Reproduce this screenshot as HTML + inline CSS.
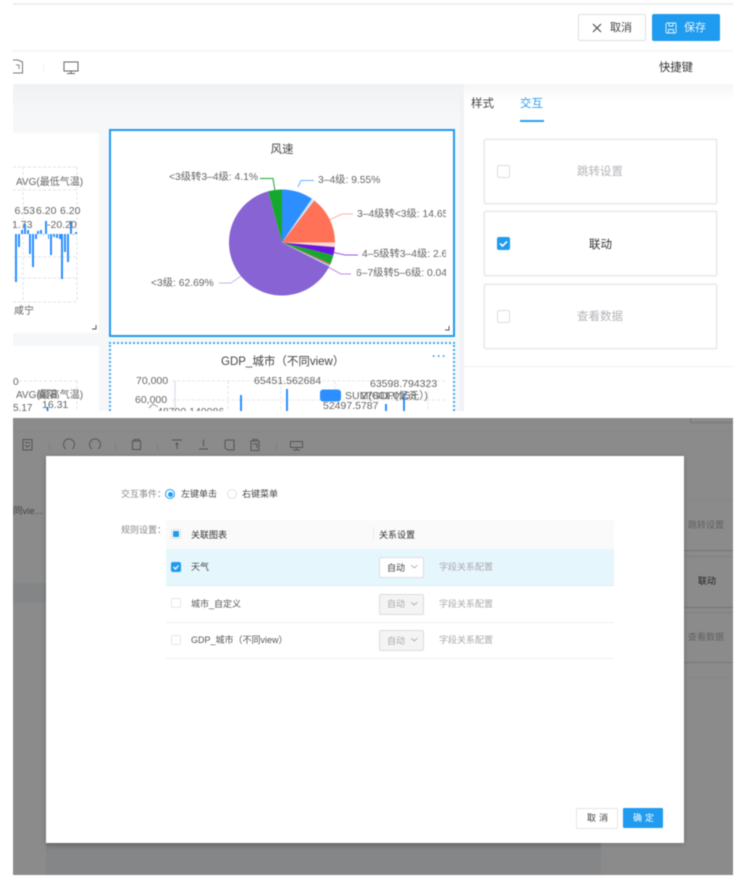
<!DOCTYPE html>
<html><head><meta charset="utf-8">
<style>
*{box-sizing:border-box;margin:0;padding:0}
html,body{width:754px;height:884px;background:#fff;overflow:hidden}
body{font-family:"Liberation Sans","Noto Sans CJK SC",sans-serif;position:relative;color:#333}
.a{position:absolute}
.t{position:absolute;white-space:nowrap;line-height:1}
#top,#bot{position:absolute;left:13px;width:720px;overflow:hidden;filter:blur(.4px)}
#top{top:0;height:411px;background:#fff}
#bot{top:418px;height:457px;background:#8b8b8b}
.card{position:absolute;left:471px;width:233px;height:65px;border:1px solid #e3e4e7;border-radius:2px;background:#fff;box-shadow:0 0 2px rgba(0,0,0,.08)}
.cb{position:absolute;width:13px;height:13px;border:1px solid #dcdde0;border-radius:2px;background:#fff}
.cb.on{background:#1f9bef;border-color:#1f9bef}
.sel{position:absolute;left:366px;width:45px;height:21px;border:1px solid #ddd;border-radius:2px;font-size:9px}
.sel span{position:absolute;left:7px;top:5.500px;line-height:1;white-space:nowrap}
.sel i{position:absolute;left:31.500px;top:5px;width:4.500px;height:4.500px;border-right:1px solid #aaa;border-bottom:1px solid #aaa;transform:scaleY(.8) rotate(45deg)}
.ln{position:absolute;left:153px;width:448px;height:1px;background:#efefef}
.hl{position:absolute;left:671px;width:49px;height:1px}
.lb{font-size:10.300px;color:#666}
</style></head><body>

<div id="top">
  <div class="a" style="left:0;top:3px;width:720px;height:2px;background:#eeeeee"></div>
  <div class="a" style="left:0;top:50px;width:720px;height:2px;background:#f6f6f6"></div>

  <div class="a" style="left:565px;top:14px;width:68px;height:27px;border:1px solid #dedede;border-radius:2px;background:#fff"></div>
  <svg class="a" style="left:579px;top:23px" width="10" height="10" viewBox="0 0 10 10"><path d="M1 1L9 9M9 1L1 9" stroke="#444" stroke-width="1.100" fill="none"/></svg>
  <div class="t" style="left:597px;top:23px;font-size:11px;color:#444">取消</div>
  <div class="a" style="left:639px;top:14px;width:68px;height:27px;border-radius:2px;background:#1f9bef"></div>
  <svg class="a" style="left:652px;top:22px" width="12" height="12" viewBox="0 0 12 12"><path d="M2 1H10.500L11 2V10.500L10.500 11H1.500L1 10.500V2ZM4 1V4H8V1M3.500 11V7.500H8.500V11" stroke="#e6f4fe" stroke-width=".9" fill="none"/></svg>
  <div class="t" style="left:671px;top:23px;font-size:11px;color:#e9f5fe">保存</div>

  <!-- toolbar -->
  <svg class="a" style="left:0;top:59px" width="12" height="16" viewBox="0 0 12 16"><path d="M0 1H5L9.500 3V14H0" stroke="#777" fill="none"/><path d="M3 6H6V10" stroke="#888" fill="none"/></svg>
  <div class="a" style="left:30px;top:63px;width:1px;height:10px;background:#f4f4f4"></div>
  <svg class="a" style="left:50px;top:61px" width="16" height="14" viewBox="0 0 16 14"><path d="M1 1H15V10H1ZM8 10V12.500M4 12.500H12" stroke="#666" fill="none" stroke-width="1"/></svg>
  <div class="t" style="left:646px;top:63px;font-size:11.300px;color:#333">快捷键</div>

  <!-- canvas -->
  <div class="a" style="left:0;top:84px;width:451px;height:327px;background:linear-gradient(#f1f2f4,#f6f7f9 30px)"></div>
  <div class="a" style="left:447px;top:84px;width:4px;height:327px;background:#f0f2f6"></div>
  <div class="a" style="left:451px;top:84px;width:269px;height:327px;background:linear-gradient(#f6f6f6,#fff 16px)"></div>

  <!-- left card 1 -->
  <div class="a" style="left:0;top:133px;width:86px;height:200px;background:#fff;overflow:hidden">
    <svg class="a" style="left:0;top:0" width="86" height="200">
      <g stroke="#e4e4e4" stroke-dasharray="3 2" fill="none">
        <path d="M0 34H64M0 57H64M0 124H64M0 145H64M0 169H64M10 34V169M64 34V169"/>
      </g>
      <g fill="#2d8fff">
        <rect x="2" y="101" width="2" height="48"/><rect x="5" y="101" width="2" height="13"/>
        <rect x="8" y="97" width="2" height="4"/><rect x="11" y="91" width="2" height="10"/><rect x="14" y="97" width="2" height="4"/>
        <rect x="16" y="101" width="2" height="20"/><rect x="19" y="101" width="2" height="33"/><rect x="22" y="101" width="2" height="5"/>
        <rect x="24" y="98" width="2" height="3"/><rect x="27" y="97" width="2" height="4"/><rect x="30" y="101" width="1" height="1"/>
        <rect x="32" y="88" width="2" height="13"/><rect x="35" y="101" width="1" height="5"/><rect x="37" y="101" width="2" height="21"/>
        <rect x="40" y="101" width="2" height="3"/><rect x="43" y="101" width="2" height="4"/><rect x="46" y="101" width="2" height="5"/>
        <rect x="48" y="101" width="2" height="45"/><rect x="51" y="101" width="2" height="18"/><rect x="54" y="101" width="2" height="28"/>
        <rect x="57" y="88" width="2" height="13"/><rect x="60" y="101" width="1" height="1"/><rect x="62" y="99" width="2" height="2"/>
      </g>
    </svg>
    <div class="t" style="left:3px;top:44.500px;font-size:10px;color:#666">AVG(最低气温)</div>
    <div class="t" style="left:1.500px;top:73px;font-size:10.500px;color:#666">6.53</div>
    <div class="t" style="left:23px;top:73px;font-size:10.500px;color:#666">6.20</div>
    <div class="t" style="left:47px;top:73px;font-size:10.500px;color:#666">6.20</div>
    <div class="t" style="left:-1px;top:87px;font-size:10.500px;color:#666">1.73</div>
    <div class="t" style="left:34px;top:87px;font-size:10.500px;color:#666">-20.20</div>
    <div class="t" style="left:1px;top:174px;font-size:10px;color:#666">咸宁</div>
    <svg class="a" style="left:78px;top:191px" width="6" height="6"><path d="M5 1V5H1" stroke="#555" fill="none"/></svg>
  </div>

  <!-- selected card -->
  <div class="a" style="left:96px;top:129px;width:346px;height:208px;border:2px solid #1f9bef;background:#fff;overflow:hidden"></div>
  <div class="t" style="left:257.500px;top:144.500px;font-size:11.500px;color:#444">风速</div>
  <svg class="a" style="left:96px;top:129px" width="346" height="208" viewBox="109 129 346 208">
    <g fill="none" stroke-width="1">
      <path d="M260 178.500H273L275 191" stroke="#16a72e"/>
      <path d="M298 187L301 180.500H314" stroke="#6db3ff"/>
      <path d="M329 220L342 214H353" stroke="#ffb3a6"/>
      <path d="M334 252.500L345 255H358" stroke="#9a55ee"/>
      <path d="M328 267L341 274H351" stroke="#c48cf0"/>
      <path d="M219 283H231L241 276" stroke="#c8b4ec"/>
    </g>
    <path d="M282 242.500L329.200 266.600A53 53 0 1 1 268.300 191.300Z" fill="#8763d4"/>
    <path d="M282 242.500L268.300 191.300A53 53 0 0 1 282 189.500Z" fill="#16a72e"/>
    <path d="M282 242.500V189.500A53 53 0 0 1 311.900 198.800Z" fill="#2d8fff"/>
    <path d="M282 242.500L311.900 198.800A53 53 0 0 1 314.300 200.500Z" fill="#cfe4ff"/>
    <path d="M282 242.500L314.300 200.500A53 53 0 0 1 335 242.500Z" fill="#ff7258"/>
    <path d="M282 242.500H335A53 53 0 0 1 334.800 247.100Z" fill="#ffd9d2"/>
    <path d="M282 242.500L334.800 247.100A53 53 0 0 1 333.400 255.300Z" fill="#6c16dd"/>
    <path d="M282 242.500L333.400 255.300A53 53 0 0 1 330.600 263.600Z" fill="#16a72e"/>
    <path d="M282 242.500L330.600 263.600A53 53 0 0 1 330 264.900Z" fill="#e0532c"/>
    <path d="M282 242.500L330 264.900A53 53 0 0 1 329.200 266.600Z" fill="#9fc9f5"/>
  </svg>
  <div class="t lb" style="left:156px;top:173px">&lt;3级转3–4级: 4.1%</div>
  <div class="t lb" style="left:305px;top:176px">3–4级: 9.55%</div>
  <div class="a" style="left:344px;top:208px;width:89px;height:84px;overflow:hidden">
    <div class="t lb" style="left:0;top:1.500px">3–4级转&lt;3级: 14.65%</div>
    <div class="t lb" style="left:5px;top:41.500px">4–5级转3–4级: 2.6%</div>
    <div class="t lb" style="left:-1px;top:60.500px">6–7级转5–6级: 0.04%</div>
  </div>
  <div class="t lb" style="left:138px;top:278.500px">&lt;3级: 62.69%</div>
  <svg class="a" style="left:431px;top:325px" width="6" height="6"><path d="M5 1V5H1" stroke="#555" fill="none"/></svg>

  <!-- left card 2 -->
  <div class="a" style="left:0;top:346px;width:86px;height:65px;background:#fff;overflow:hidden">
    <svg class="a" style="left:0;top:0" width="86" height="65"><path d="M6 35H64M64 35V65M6 35V37" stroke="#e4e4e4" stroke-dasharray="3 2" fill="none"/><rect x="33.500" y="61" width="2" height="4" fill="#2d8fff"/></svg>
    <div class="t" style="left:0;top:32px;font-size:10px;color:#666">0</div>
    <div class="t" style="left:3px;top:44.500px;font-size:10px;color:#666">AVG(最高气温)</div>
    <div class="t" style="left:24px;top:44.500px;font-size:10px;color:#666">襄阳</div>
    <div class="t" style="left:29px;top:54px;font-size:10.500px;color:#666">16.31</div>
    <div class="t" style="left:0;top:58px;font-size:10px;color:#666">5.17</div>
  </div>

  <!-- GDP card -->
  <div class="a" style="left:96px;top:342px;width:346px;height:80px;border:2px dotted #3ba6f0;background:#fff"></div>
  <div class="t" style="left:208px;top:357px;font-size:11.500px;color:#444">GDP_城市（不同view）</div>
  <div class="t" style="left:419px;top:350px;font-size:12px;color:#4aa5ee;letter-spacing:1px;font-weight:bold">···</div>
  <svg class="a" style="left:96px;top:342px" width="346" height="69" viewBox="109 342 346 69">
    <g stroke="#e6e6e6" stroke-dasharray="3 2" fill="none">
      <path d="M172 381H445M172 400H445M228 381V411M281 381V411M335 381V411M428 381V411"/>
    </g>
    <path d="M175 381V411" stroke="#dde3ec" stroke-width="1.500"/>
    <path d="M149 408L153 404L158 407" stroke="#999" fill="none"/>
    <rect x="240" y="395" width="2" height="16" fill="#2d8fff"/>
    <rect x="286" y="389" width="2" height="22" fill="#2d8fff"/>
    <rect x="385" y="404" width="2" height="7" fill="#2d8fff"/>
    <rect x="403" y="393" width="2" height="18" fill="#2d8fff"/>
    <rect x="320" y="389.500" width="21" height="12" rx="3" fill="#2d8fff"/>
  </svg>
  <div class="t lb" style="left:123px;top:376px;font-size:10.500px">70,000</div>
  <div class="t lb" style="left:122px;top:395px;font-size:10.500px">60,000</div>
  <div class="t lb" style="left:144px;top:406.500px;font-size:10.500px">48790.140086</div>
  <div class="t lb" style="left:241px;top:375.500px;font-size:10.500px">65451.562684</div>
  <div class="t lb" style="left:357px;top:379px;font-size:10.500px">63598.794323</div>
  <div class="t lb" style="left:332px;top:390.500px;font-size:10.500px">SUM(GDP(亿元）)</div>
  <div class="t lb" style="left:348px;top:390.500px;font-size:10.500px">27801.0153</div>
  <div class="t lb" style="left:310px;top:400.500px;font-size:10.500px">52497.5787</div>
  <div class="a" style="left:0;top:411px;width:720px;height:10px;background:#fff"></div>

  <!-- right panel -->
  <div class="t" style="left:458px;top:98.500px;font-size:11.500px;color:#444">样式</div>
  <div class="t" style="left:507px;top:98.500px;font-size:11.500px;color:#2f9fee">交互</div>
  <div class="a" style="left:507px;top:120px;width:24px;height:2px;background:#2f9fee"></div>

  <div class="card" style="top:139px"></div>
  <div class="cb" style="left:484px;top:165px"></div>
  <div class="t" style="left:564px;top:167px;font-size:11.500px;color:#b4b5ba">跳转设置</div>

  <div class="card" style="top:211px"></div>
  <div class="cb on" style="left:484px;top:237px"></div>
  <svg class="a" style="left:484px;top:237px" width="13" height="13"><path d="M3 6.500L5.500 9L10 4.500" stroke="#fff" stroke-width="1.600" fill="none"/></svg>
  <div class="t" style="left:576px;top:239.500px;font-size:11.500px;color:#333">联动</div>

  <div class="card" style="top:283.500px;height:65px"></div>
  <div class="cb" style="left:484px;top:310px"></div>
  <div class="t" style="left:564px;top:311.500px;font-size:11.500px;color:#b4b5ba">查看数据</div>
  <div class="a" style="left:451px;top:366px;width:269px;height:1px;background:#f1f1f1"></div>
</div>

<div id="bot">
  <div class="a" style="left:0;top:13px;width:720px;height:1px;background:#868686"></div>
  <div class="a" style="left:677px;top:0;width:43px;height:5px;border:1px solid #777;border-top:0;border-right:0"></div>
  <div class="a" style="left:0;top:165px;width:33px;height:20px;background:#838587"></div>
  <div class="hl" style="top:82px;background:#868686"></div>
  <div class="hl" style="top:132px;background:#757575"></div>
  <div class="hl" style="top:138px;background:#808080"></div>
  <div class="hl" style="top:189px;background:#757575"></div>
  <div class="hl" style="top:194px;background:#808080"></div>
  <div class="hl" style="top:244px;background:#787878"></div>
  <div class="hl" style="top:259px;background:#868686"></div>
  <div class="a" style="left:33px;top:425px;width:555px;height:32px;background:linear-gradient(#787878,#858687 8px)"></div>
  <div class="t" style="left:0;top:88.500px;font-size:9.500px;color:#444">同vie...</div>
  <div class="t" style="left:675px;top:103px;font-size:9px;color:#626262">跳转设置</div>
  <div class="t" style="left:685px;top:159px;font-size:9px;color:#222">联动</div>
  <div class="t" style="left:675px;top:215px;font-size:9px;color:#626262">查看数据</div>

  <svg class="a" style="left:0;top:14px" width="300" height="26" viewBox="0 0 300 26">
    <g fill="none" stroke="#555" stroke-width="1">
      <path d="M10 7.500H19V18H10ZM12 10.500H17M12 13L14.500 15L17 13"/>
      <path d="M53 17A5.500 5.500 0 1 1 59 17"/>
      <path d="M79 17A5.500 5.500 0 1 1 85 17"/>
      <path d="M119.500 9H127.500V17.500H119.500ZM121 9V7.500H126V9"/>
      <path d="M159 8H169M164 11V17M162.500 12.500L164 11L165.500 12.500"/>
      <path d="M186 17H195M190.500 7.500V14.500"/>
      <path d="M213 8H221V18H215L212 16V9Z"/>
      <path d="M238 9H246V18.500H238ZM240 9V7.500H245M240 12H244V16"/>
      <path d="M277.500 9.500H289.500V15.500H277.500ZM283.500 15.500V18M280 18H287"/>
    </g>
    <g fill="#7d7d7d"><rect x="36" y="11" width="1" height="7"/><rect x="102" y="11" width="1" height="7"/><rect x="144" y="11" width="1" height="7"/><rect x="263" y="11" width="1" height="7"/></g>
  </svg>

  <!-- modal -->
  <div class="a" style="left:32.500px;top:38px;width:638.500px;height:387px;background:#fff;box-shadow:0 1px 5px rgba(0,0,0,.2)"></div>

  <div class="t" style="left:108px;top:72px;font-size:9px;color:#888">交互事件：</div>
  <div class="a" style="left:152px;top:71px;width:10px;height:10px;border:1px solid #1f9bef;border-radius:50%"></div>
  <div class="a" style="left:154.500px;top:73.500px;width:5px;height:5px;background:#1f9bef;border-radius:50%"></div>
  <div class="t" style="left:168px;top:72px;font-size:9px;color:#444">左键单击</div>
  <div class="a" style="left:214px;top:71px;width:10px;height:10px;border:1px solid #e2e2e2;border-radius:50%"></div>
  <div class="t" style="left:229px;top:72px;font-size:9px;color:#444">右键菜单</div>
  <div class="t" style="left:108px;top:108px;font-size:9px;color:#888">规则设置：</div>

  <div class="a" style="left:153px;top:102px;width:448px;height:29px;background:#fafafa"></div>
  <div class="a" style="left:153px;top:131px;width:448px;height:36px;background:#e6f6fd"></div>
  <div class="ln" style="top:167px;background:#dcecf3"></div>
  <div class="ln" style="top:204px"></div>
  <div class="ln" style="top:240px"></div>
  <div class="a" style="left:360px;top:109px;width:1px;height:14px;background:#ececec"></div>

  <div class="cb" style="left:158px;top:111px;width:10px;height:10px;border-color:#e2e2e2"></div>
  <div class="a" style="left:160px;top:113px;width:6px;height:6px;background:#1f9bef"></div>
  <div class="t" style="left:178px;top:112.500px;font-size:9px;color:#333">关联图表</div>
  <div class="t" style="left:366px;top:112.500px;font-size:9px;color:#333">关系设置</div>

  <div class="cb on" style="left:158px;top:144px;width:10px;height:10px"></div>
  <svg class="a" style="left:158px;top:144px" width="10" height="10"><path d="M2.500 5L4.500 7L7.500 3.500" stroke="#fff" stroke-width="1.300" fill="none"/></svg>
  <div class="t" style="left:178px;top:145px;font-size:9px;color:#444">天气</div>
  <div class="sel" style="top:139px;background:#fff;color:#444"><span>自动</span><i></i></div>
  <div class="t" style="left:426px;top:145px;font-size:9px;color:#a8a9ae">字段关系配置</div>

  <div class="cb" style="left:158px;top:180px;width:10px;height:10px;border-color:#e6e6e6"></div>
  <div class="t" style="left:178px;top:181.500px;font-size:9px;color:#555">城市_自定义</div>
  <div class="sel" style="top:175.500px;background:#f4f4f4;color:#aaa"><span>自动</span><i></i></div>
  <div class="t" style="left:426px;top:181.500px;font-size:9px;color:#a8a9ae">字段关系配置</div>

  <div class="cb" style="left:158px;top:217px;width:10px;height:10px;border-color:#e6e6e6"></div>
  <div class="t" style="left:178px;top:217.500px;font-size:9px;color:#555">GDP_城市（不同view）</div>
  <div class="sel" style="top:212px;background:#f4f4f4;color:#aaa"><span>自动</span><i></i></div>
  <div class="t" style="left:426px;top:217.500px;font-size:9px;color:#a8a9ae">字段关系配置</div>

  <div class="a" style="left:563px;top:390px;width:42px;height:21px;border:1px solid #e6e6e6;border-radius:2px;background:#fff"></div>
  <div class="t" style="left:574px;top:396px;font-size:9px;color:#444;letter-spacing:3px">取消</div>
  <div class="a" style="left:610px;top:390px;width:40px;height:20px;border-radius:1px;background:#1f9bef"></div>
  <div class="t" style="left:620px;top:396px;font-size:9px;color:#fff;letter-spacing:3px">确定</div>
</div>
</body></html>
